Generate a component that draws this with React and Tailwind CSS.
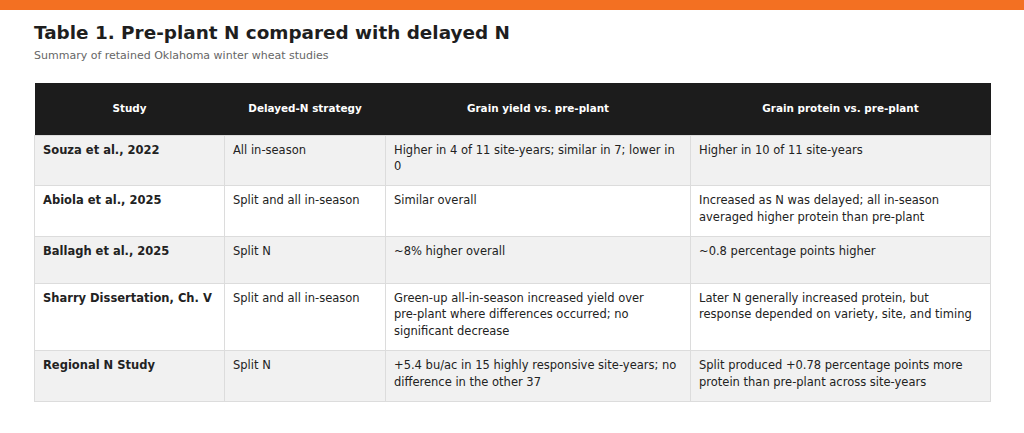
const rows = [
    {
        study: "Souza et al., 2022",
        strategy: "All in-season",
        yield: "Higher in 4 of 11 site-years; similar in 7; lower in 0",
        protein: "Higher in 10 of 11 site-years",
    },
    {
        study: "Abiola et al., 2025",
        strategy: "Split and all in-season",
        yield: "Similar overall",
        protein: "Increased as N was delayed; all in-season averaged higher protein than pre-plant",
    },
    {
        study: "Ballagh et al., 2025",
        strategy: "Split N",
        yield: "~8% higher overall",
        protein: "~0.8 percentage points higher",
    },
    {
        study: "Sharry Dissertation, Ch. V",
        strategy: "Split and all in-season",
        yield: (
            <>
                Green-up all-in-season increased yield over <span className="whitespace-nowrap">pre-plant</span> where differences occurred; no significant decrease
            </>
        ),
        protein: "Later N generally increased protein, but response depended on variety, site, and timing",
    },
    {
        study: "Regional N Study",
        strategy: "Split N",
        yield: "+5.4 bu/ac in 15 highly responsive site-years; no difference in the other 37",
        protein: "Split produced +0.78 percentage points more protein than pre-plant across site-years",
    },
]

function App() {
    return (
        <div className="min-h-[433px] bg-white font-['DejaVu_Sans',sans-serif] text-[#222]">
            <div className="h-[10px] bg-[#f37022]" />
            <div className="px-[34px] pt-[11px]">
                <h1 className="text-[18.4px] font-bold leading-[24px] text-[#1e1e1e]">
                    Table 1. Pre-plant N compared with delayed N
                </h1>
                <p className="mt-[4px] text-[11px] leading-[14px] text-[#666]">
                    Summary of retained Oklahoma winter wheat studies
                </p>
                <table className="mt-[20px] w-full border-collapse table-fixed text-[11.5px] leading-[16.8px]">
                    <colgroup>
                        <col className="w-[190px]" />
                        <col className="w-[161px]" />
                        <col className="w-[305px]" />
                        <col className="w-[300px]" />
                    </colgroup>
                    <thead>
                        <tr className="bg-[#1c1c1c] text-white">
                            <th className="h-[52px] px-2 text-center text-[10.4px] font-bold">Study</th>
                            <th className="h-[52px] px-2 text-center text-[10.4px] font-bold">Delayed-N strategy</th>
                            <th className="h-[52px] px-2 text-center text-[10.4px] font-bold">Grain yield vs. pre-plant</th>
                            <th className="h-[52px] px-2 text-center text-[10.4px] font-bold">Grain protein vs. pre-plant</th>
                        </tr>
                    </thead>
                    <tbody>
                        {rows.map((row, i) => (
                            <tr key={row.study} className={i % 2 === 0 ? "bg-[#f1f1f1]" : "bg-white"}>
                                <td className="h-[47px] border border-[#dcdcdc] px-2 pt-[6px] pb-[10px] align-top font-bold">{row.study}</td>
                                <td className="h-[47px] border border-[#dcdcdc] px-2 pt-[6px] pb-[10px] align-top">{row.strategy}</td>
                                <td className="h-[47px] border border-[#dcdcdc] px-2 pt-[6px] pb-[10px] align-top">{row.yield}</td>
                                <td className="h-[47px] border border-[#dcdcdc] px-2 pt-[6px] pb-[10px] align-top">{row.protein}</td>
                            </tr>
                        ))}
                    </tbody>
                </table>
            </div>
        </div>
    )
}

export default App
